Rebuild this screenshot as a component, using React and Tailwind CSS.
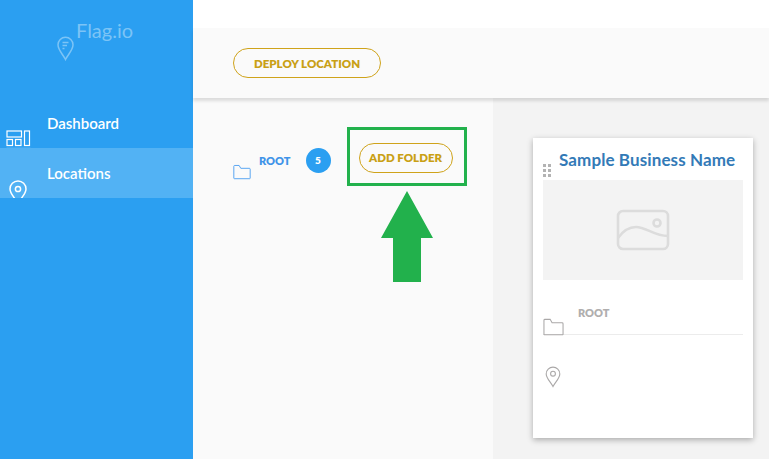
import React from 'react';

const font = { fontFamily: 'Lato, "Open Sans", sans-serif' };

const FolderIcon = ({ className }) => (
  <svg className={className} viewBox="0 0 22 18" fill="none" stroke="currentColor" strokeWidth="1.100">
    <path d="M1 16.500V2a1 1 0 0 1 1-1h5.500l2 3.500h10.500a1 1 0 0 1 1 1v11a.7.7 0 0 1-.7.7H1.700a.7.7 0 0 1-.7-.7z" />
  </svg>
);

const PinIcon = ({ className }) => (
  <svg className={className} viewBox="0 0 16 22" fill="none" stroke="currentColor" strokeWidth="1.100">
    <path d="M8 20.500C5.500 16 1.200 12 1.200 7.900a6.800 6.800 0 0 1 13.600 0C14.800 12 10.500 16 8 20.500z" />
    <circle cx="8" cy="7.700" r="2.400" />
  </svg>
);

const Sidebar = () => (
  <aside className="w-[193px] shrink-0 bg-[#2b9ff1] text-white">
    <div className="h-[98px] flex items-start pl-[57px] pt-[19px] gap-[2px]">
      <svg className="w-[17px] h-[25px] mt-[17px] text-[#7cc4f6]" viewBox="0 0 17 25" fill="none" stroke="currentColor" strokeWidth="1.500">
        <path d="M8.500 23.500C6 18.500 1 14 1 8.800a7.500 7.500 0 0 1 15 0C16 14 11 18.500 8.500 23.500z" />
        <path d="M5.500 6.500h6M5.500 9.500h4.500M5.500 12.500h2" strokeWidth="1.300" />
      </svg>
      <span className="text-[20px] leading-[22px] text-[#7cc4f6]">Flag.io</span>
    </div>
    <div className="h-[50px] relative overflow-hidden pl-[47px] pt-[15px] text-[15px] leading-5 font-semibold">
      Dashboard
      <svg className="absolute left-[6px] top-[32px] w-[25px] h-[20px]" viewBox="0 0 25 20" fill="none" stroke="currentColor" strokeWidth="1.200">
        <rect x="1" y="1" width="14.500" height="6" />
        <rect x="1" y="9.500" width="5.500" height="6" />
        <rect x="9.500" y="9.500" width="5.500" height="6" />
        <rect x="18.500" y="1" width="5" height="14.500" />
        <path d="M0.500 18.500h24" />
      </svg>
    </div>
    <div className="h-[50px] relative overflow-hidden pl-[47px] pt-[15px] text-[15px] leading-5 font-semibold bg-[#52b2f4]">
      Locations
      <svg className="absolute left-[9px] top-[32px] w-[18px] h-[24px]" viewBox="0 0 18 24" fill="none" stroke="currentColor" strokeWidth="1.500">
        <path d="M9 23C6 18 1 14 1 9a8 8 0 0 1 16 0c0 5-5 9-8 14z" />
        <circle cx="9" cy="9" r="2.600" />
      </svg>
    </div>
  </aside>
);

const Pill = ({ children, className }) => (
  <button className={`rounded-full border border-[#cfa31a] text-[#c9a015] text-[11.500px] font-extrabold flex items-center justify-center ${className}`}>
    {children}
  </button>
);

const Card = () => (
  <div className="w-[220px] h-[300px] bg-white shadow-[0_2px_6px_rgba(0,0,0,0.3)] px-[10px] relative">
    <div className="h-[42px] pl-[16px] pt-[11px] text-[17px] leading-[22px] font-bold tracking-[0.1px] text-[#337ab7] whitespace-nowrap">Sample Business Name</div>
    <div className="absolute left-[10px] top-[26px] grid grid-cols-2 gap-[2px]">
      {[0, 1, 2, 3, 4, 5].map((i) => (
        <span key={i} className="w-[3px] h-[3px] bg-[#b3b3b3]" />
      ))}
    </div>
    <div className="h-[100px] bg-[#f3f3f3] flex items-center justify-center">
      <svg className="w-[54px] h-[42px] text-[#dcdcdc]" viewBox="0 0 54 42" fill="none" stroke="currentColor" strokeWidth="2.600">
        <rect x="2" y="2" width="50" height="38" rx="5" />
        <path d="M2 29C7 22 13 18 20 18C30 18 38 27 52 27" />
        <circle cx="41" cy="14" r="3.500" />
      </svg>
    </div>
    <div className="h-[55px] border-b border-[#ececec] relative pl-[35px] pt-[26px] text-[11px] leading-[14px] font-extrabold text-[#b0aeae]">
      ROOT
      <FolderIcon className="absolute left-0 top-[38px] w-[21px] h-[18px] text-[#aaa8a8]" />
    </div>
    <PinIcon className="mt-[31px] ml-[2px] w-[16px] h-[22px] text-[#aaa8a8]" />
  </div>
);

const App = () => {
  return (
    <div className="w-[769px] h-[459px] flex overflow-hidden bg-white relative" style={font}>
      <Sidebar />
      <main className="flex-1 flex flex-col">
        <div className="h-[28px] bg-white" />
        <div className="h-[70px] bg-[#fafafa] pl-[40px] pt-[20px] shadow-[0_3px_3px_rgba(0,0,0,0.12)] relative z-10">
          <Pill className="w-[148px] h-[30px] pt-[2px]">DEPLOY LOCATION</Pill>
        </div>
        <div className="flex-1 flex">
          <div className="w-[300px] bg-[#fafafa] flex items-start pl-[40px]">
            <FolderIcon className="mt-[66px] w-[18px] h-[16px] text-[#4a9df0]" />
            <span className="ml-[8px] mt-[56px] text-[11px] leading-[14px] font-extrabold text-[#3f93e8]">ROOT</span>
            <span className="ml-[15px] mt-[50px] w-[25px] h-[25px] rounded-full bg-[#2b9ff1] text-white text-[10px] font-extrabold flex items-center justify-center">5</span>
            <Pill className="ml-[28px] mt-[45px] w-[94px] h-[30px]">ADD FOLDER</Pill>
          </div>
          <div className="flex-1 bg-[#f3f3f3] pl-[40px] pt-[40px]">
            <Card />
          </div>
        </div>
      </main>
      {/* annotation over the page */}
      <div className="absolute z-20 left-[347px] top-[127px] w-[120px] h-[59px] border-[3px] border-[#22b14c]" />
      <svg className="absolute z-20 left-[381px] top-[191px] w-[52px] h-[91px]" viewBox="0 0 52 91" fill="#22b14c">
        <path d="M26 0L52 47H40V91H12V47H0z" />
      </svg>
    </div>
  );
};

export default App;
